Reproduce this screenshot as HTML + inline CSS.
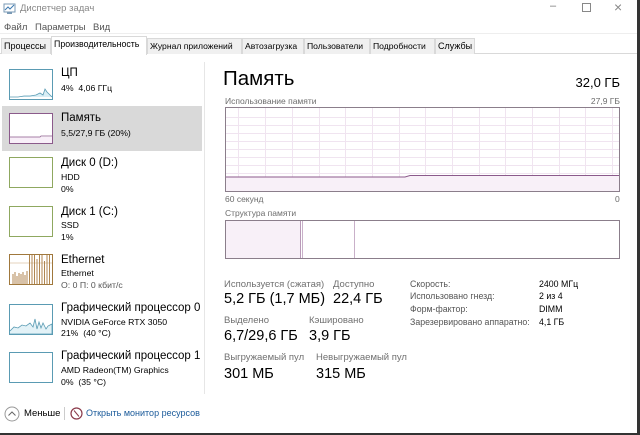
<!DOCTYPE html><html><head><meta charset="utf-8"><style>
*{margin:0;padding:0;box-sizing:border-box}
body{width:640px;height:435px;background:#fff;font-family:"Liberation Sans","DejaVu Sans",sans-serif;position:relative;overflow:hidden;color:#000}
.a{position:absolute;white-space:nowrap}
.g{color:#6d6d6d}
.tab{position:absolute;top:38px;height:16px;border:1px solid #d9d9d9;border-bottom:none;background:#f0f0f0;font-size:9px;padding:2px 2px;color:#000;white-space:nowrap;overflow:hidden}
.th{position:absolute;left:9px;width:44px;height:31px;border:1px solid #8c8c8c;background:#fff;overflow:hidden}
.t1{position:absolute;left:61px;font-size:11.5px;white-space:nowrap}
.t2{position:absolute;left:61px;font-size:8.7px;white-space:nowrap}
.lbl{position:absolute;font-size:9.5px;color:#707070;white-space:nowrap}
.val{position:absolute;font-size:14.5px;white-space:nowrap}
.rs{position:absolute;font-size:8.8px;color:#555;white-space:nowrap}
.rv{position:absolute;left:539px;font-size:8.8px;white-space:nowrap}
</style></head><body>
<svg class="a" style="left:3px;top:3px" width="13" height="12"><rect x="1" y="1" width="11" height="8" fill="#fff" stroke="#7a9ab5"/><polyline points="2,7 5,4 7,6 11,2" fill="none" stroke="#3b78b0"/><rect x="4" y="9" width="5" height="2" fill="#7a9ab5"/></svg>
<div class="a g" style="left:20px;top:3px;font-size:9.5px;color:#888">Диспетчер задач</div>
<div class="a" style="left:550px;top:0px;font-size:11px;color:#777">–</div>
<div class="a" style="left:582px;top:3px;width:9px;height:9px;border:1px solid #888"></div>
<div class="a" style="left:614px;top:-1px;font-size:14px;color:#888">×</div>
<div class="a" style="left:4px;top:22px;font-size:9.5px;color:#555">Файл</div>
<div class="a" style="left:35px;top:22px;font-size:9.5px;color:#555">Параметры</div>
<div class="a" style="left:93px;top:22px;font-size:9.5px;color:#555">Вид</div>
<div class="a" style="left:0;top:33px;width:637px;height:1px;background:#eee"></div>
<div class="a" style="left:0;top:53px;width:637px;height:1px;background:#d9d9d9"></div>
<div class="tab" style="left:1px;width:50px">Процессы</div>
<div class="tab" style="left:51px;width:96px;top:36px;height:19px;background:#fff;font-size:8.8px">Производительность</div>
<div class="tab" style="left:147px;width:95px;font-size:8.6px">Журнал приложений</div>
<div class="tab" style="left:242px;width:62px;font-size:8.6px">Автозагрузка</div>
<div class="tab" style="left:304px;width:66px;font-size:8.6px">Пользователи</div>
<div class="tab" style="left:370px;width:65px;font-size:8.6px">Подробности</div>
<div class="tab" style="left:435px;width:40px">Службы</div>
<div class="a" style="left:204px;top:62px;width:1px;height:332px;background:#e6e6e6"></div>
<div class="a" style="left:2px;top:106px;width:200px;height:45px;background:#d9d9d9"></div>
<div class="th" style="top:69px;border-color:#5a9bb3"><svg width="42" height="29"><polyline points="0,27 8,27 14,26 20,26 26,25 30,23 33,25 35,19 37,22 39,24 42,27" fill="#d8eef5" stroke="#5a9bb3" stroke-width=".8"/></svg></div>
<div class="t1" style="top:67px">ЦП</div><div class="t2" style="top:83px">4%&nbsp; 4,06 ГГц</div>
<div class="th" style="top:113px;border-color:#8b5a8b"><svg width="42" height="29"><rect x="0" y="23" width="42" height="6" fill="#f8eff8"/><polyline points="0,23 30,23 31,22 42,22" fill="none" stroke="#8b5a8b" stroke-width=".8"/></svg></div>
<div class="t1" style="top:112px">Память</div><div class="t2" style="top:128px">5,5/27,9 ГБ (20%)</div>
<div class="th" style="top:157px;border-color:#8fa860"></div>
<div class="t1" style="top:157px">Диск 0 (D:)</div><div class="t2" style="top:172px">HDD</div><div class="t2" style="top:184px">0%</div>
<div class="th" style="top:206px;border-color:#8fa860"></div>
<div class="t1" style="top:206px">Диск 1 (C:)</div><div class="t2" style="top:220px">SSD</div><div class="t2" style="top:232px">1%</div>
<div class="th" style="top:254px;border-color:#a0783c"><svg width="42" height="29"><line x1="0" y1="8" x2="42" y2="8" stroke="#c9a77a" stroke-width=".6"/><g stroke="#b08650" stroke-width="1"><path d="M3 29V19M5 29V17M7 29V21M9 29V18M11 29V19M13 29V17M15 29V20M17 29V16M19.5 29V0M22 29V0M24.5 29V0M27 29V4M29.5 29V0M32 29V0M34.5 29V6M37 29V0M39.5 29V0"/></g></svg></div>
<div class="t1" style="top:254px">Ethernet</div><div class="t2" style="top:268px">Ethernet</div><div class="t2" style="top:280px;color:#555">О: 0 П: 0 кбит/с</div>
<div class="th" style="top:304px;border-color:#5a9bb3"><svg width="42" height="29"><polyline points="0,26 4,22 8,23 12,20 16,21 20,18 23,22 25,14 27,24 29,17 31,23 33,18 36,24 38,21 42,19 42,29 0,29" fill="#e3f2f7" stroke="#5a9bb3" stroke-width=".8"/></svg></div>
<div class="t1" style="top:302px">Графический процессор 0</div><div class="t2" style="top:317px">NVIDIA GeForce RTX 3050</div><div class="t2" style="top:328px">21%&nbsp; (40 °C)</div>
<div class="th" style="top:352px;border-color:#5a9bb3"></div>
<div class="t1" style="top:350px">Графический процессор 1</div><div class="t2" style="top:365px">AMD Radeon(TM) Graphics</div><div class="t2" style="top:377px">0%&nbsp; (35 °C)</div>
<svg class="a" style="left:4px;top:406px" width="16" height="16"><circle cx="8" cy="8" r="7" fill="none" stroke="#999"/><polyline points="4.5,9.5 8,6 11.5,9.5" fill="none" stroke="#666"/></svg>
<div class="a" style="left:24px;top:408px;font-size:9.5px">Меньше</div>
<div class="a" style="left:64px;top:407px;width:1px;height:13px;background:#ccc"></div>
<svg class="a" style="left:70px;top:407px" width="13" height="13"><circle cx="6.5" cy="6.5" r="5.5" fill="#fff" stroke="#8b3a4a" stroke-width="1.2"/><line x1="4" y1="3.5" x2="9" y2="9.5" stroke="#8b3a4a"/></svg>
<div class="a" style="left:86px;top:408px;font-size:9px;color:#1a5a9a">Открыть монитор ресурсов</div>
<div class="a" style="left:223px;top:67px;font-size:20.5px">Память</div>
<div class="a" style="right:20px;top:75px;font-size:13px">32,0 ГБ</div>
<div class="a g" style="left:225px;top:96px;font-size:8.5px">Использование памяти</div>
<div class="a g" style="right:20px;top:96px;font-size:8.5px">27,9 ГБ</div>
<svg class="a" style="left:225px;top:107px" width="395" height="85">
<rect x="0.5" y="0.5" width="394" height="84" fill="#fff" stroke="#8b7e8b"/>
<g stroke="#f0e4f0" stroke-width="1">
<path d="M1 10.5H394M1 18.5H394M1 26.5H394M1 34.5H394M1 42.5H394M1 50.5H394M1 58.5H394M1 66.5H394M1 74.5H394"/>
<path d="M13.5 1V84M40.5 1V84M67.5 1V84M94.5 1V84M120.5 1V84M147.5 1V84M174.5 1V84M200.5 1V84M227.5 1V84M254.5 1V84M280.5 1V84M307.5 1V84M334.5 1V84M360.5 1V84M387.5 1V84"/>
</g>
<polygon points="1,70 180,70 185,68.5 394,68.5 394,84 1,84" fill="#f8f0f8"/>
<polyline points="1,70 180,70 185,68.5 394,68.5" fill="none" stroke="#8b5a8b" stroke-width="1"/>
</svg>
<div class="a g" style="left:225px;top:194px;font-size:8.5px">60 секунд</div>
<div class="a g" style="left:615px;top:194px;font-size:8.5px">0</div>
<div class="a g" style="left:225px;top:208px;font-size:8.5px">Структура памяти</div>
<div class="a" style="left:225px;top:220px;width:395px;height:39px;border:1px solid #8b7e8b"></div>
<div class="a" style="left:226px;top:221px;width:74px;height:37px;background:#f8f0f8"></div>
<div class="a" style="left:300px;top:221px;width:1px;height:37px;background:#b89ab8"></div>
<div class="a" style="left:302px;top:221px;width:1px;height:37px;background:#c9b0c9"></div>
<div class="a" style="left:354px;top:221px;width:1px;height:37px;background:#c9b0c9"></div>
<div class="lbl" style="left:224px;top:279px">Используется (сжатая)</div>
<div class="lbl" style="left:333px;top:279px">Доступно</div>
<div class="val" style="left:224px;top:291px">5,2 ГБ (1,7 МБ)</div>
<div class="val" style="left:333px;top:291px">22,4 ГБ</div>
<div class="lbl" style="left:224px;top:315px">Выделено</div>
<div class="lbl" style="left:309px;top:315px">Кэшировано</div>
<div class="val" style="left:224px;top:328px">6,7/29,6 ГБ</div>
<div class="val" style="left:309px;top:328px">3,9 ГБ</div>
<div class="lbl" style="left:224px;top:352px">Выгружаемый пул</div>
<div class="lbl" style="left:316px;top:352px">Невыгружаемый пул</div>
<div class="val" style="left:224px;top:366px">301 МБ</div>
<div class="val" style="left:316px;top:366px">315 МБ</div>
<div class="rs" style="left:410px;top:279px">Скорость:</div><div class="rv" style="top:279px">2400 МГц</div>
<div class="rs" style="left:410px;top:291px">Использовано гнезд:</div><div class="rv" style="top:291px">2 из 4</div>
<div class="rs" style="left:410px;top:304px">Форм-фактор:</div><div class="rv" style="top:304px">DIMM</div>
<div class="rs" style="left:410px;top:317px">Зарезервировано аппаратно:</div><div class="rv" style="top:317px">4,1 ГБ</div>
<div class="a" style="left:637px;top:0;width:3px;height:435px;background:#333"></div>
<div class="a" style="left:0;top:433px;width:640px;height:2px;background:#333"></div>
</body></html>
